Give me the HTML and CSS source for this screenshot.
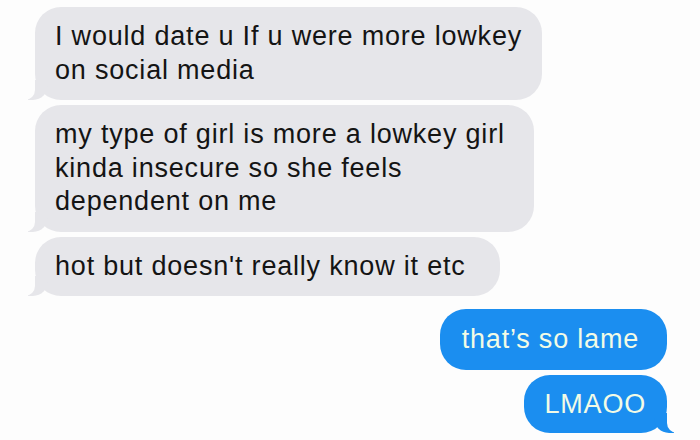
FILE: index.html
```html
<!DOCTYPE html>
<html>
<head>
<meta charset="utf-8">
<link rel="stylesheet" href="styles.css">
</head>
<body>
<div class="thread">
  <div class="msg them tail">I would date u If u were more lowkey<br>on social media</div>
  <div class="msg them tail wide">my type of girl is more a lowkey girl<br>kinda insecure so she feels<br>dependent on me</div>
  <div class="msg them tail wider">hot but doesn't really know it etc</div>
  <div class="spacer"></div>
  <div class="msg me first">that’s so lame</div>
  <div class="msg me tail">LMAOO</div>
</div>
</body>
</html>
```
FILE: styles.css
```css
html, body {
  margin: 0;
  background: #fdfdfd;
}
.thread {
  width: 700px;
  height: 440px;
  box-sizing: border-box;
  padding: 7px 33px 0 35px;
  display: flex;
  flex-direction: column;
  gap: 5px;
  font-family: "Liberation Sans", Arial, sans-serif;
  font-size: 27px;
  letter-spacing: 0.8px;
  line-height: 33.5px;
  overflow: hidden;
}
.msg {
  position: relative;
  padding: 13px 20px 13px 20px;
  border-radius: 26px;
  max-width: max-content;
}
.them {
  align-self: flex-start;
  background: #e6e6ea;
  color: #141414;
}
.them.wide {
  padding-right: 29px;
}
.them.wider {
  padding-right: 34px;
}
.me {
  align-self: flex-end;
  background: #1b8ef0;
  color: #f2fbe6;
  padding: 13px 21px 12px 20px;
}
.me.first {
  padding: 14px 28px 13px 22px;
}
.spacer {
  height: 3px;
}
.them.tail::before {
  content: "";
  position: absolute;
  left: -7px;
  bottom: 0;
  width: 20px;
  height: 20px;
  background: #e6e6ea;
  border-bottom-right-radius: 15px;
}
.them.tail::after {
  content: "";
  position: absolute;
  left: -10px;
  bottom: 0;
  width: 10px;
  height: 20px;
  background: #fdfdfd;
  border-bottom-right-radius: 10px;
}
.me.tail::before {
  content: "";
  position: absolute;
  right: -7px;
  bottom: 0;
  width: 20px;
  height: 20px;
  background: #1b8ef0;
  border-bottom-left-radius: 15px;
}
.me.tail::after {
  content: "";
  position: absolute;
  right: -10px;
  bottom: 0;
  width: 10px;
  height: 20px;
  background: #fdfdfd;
  border-bottom-left-radius: 10px;
}
```
